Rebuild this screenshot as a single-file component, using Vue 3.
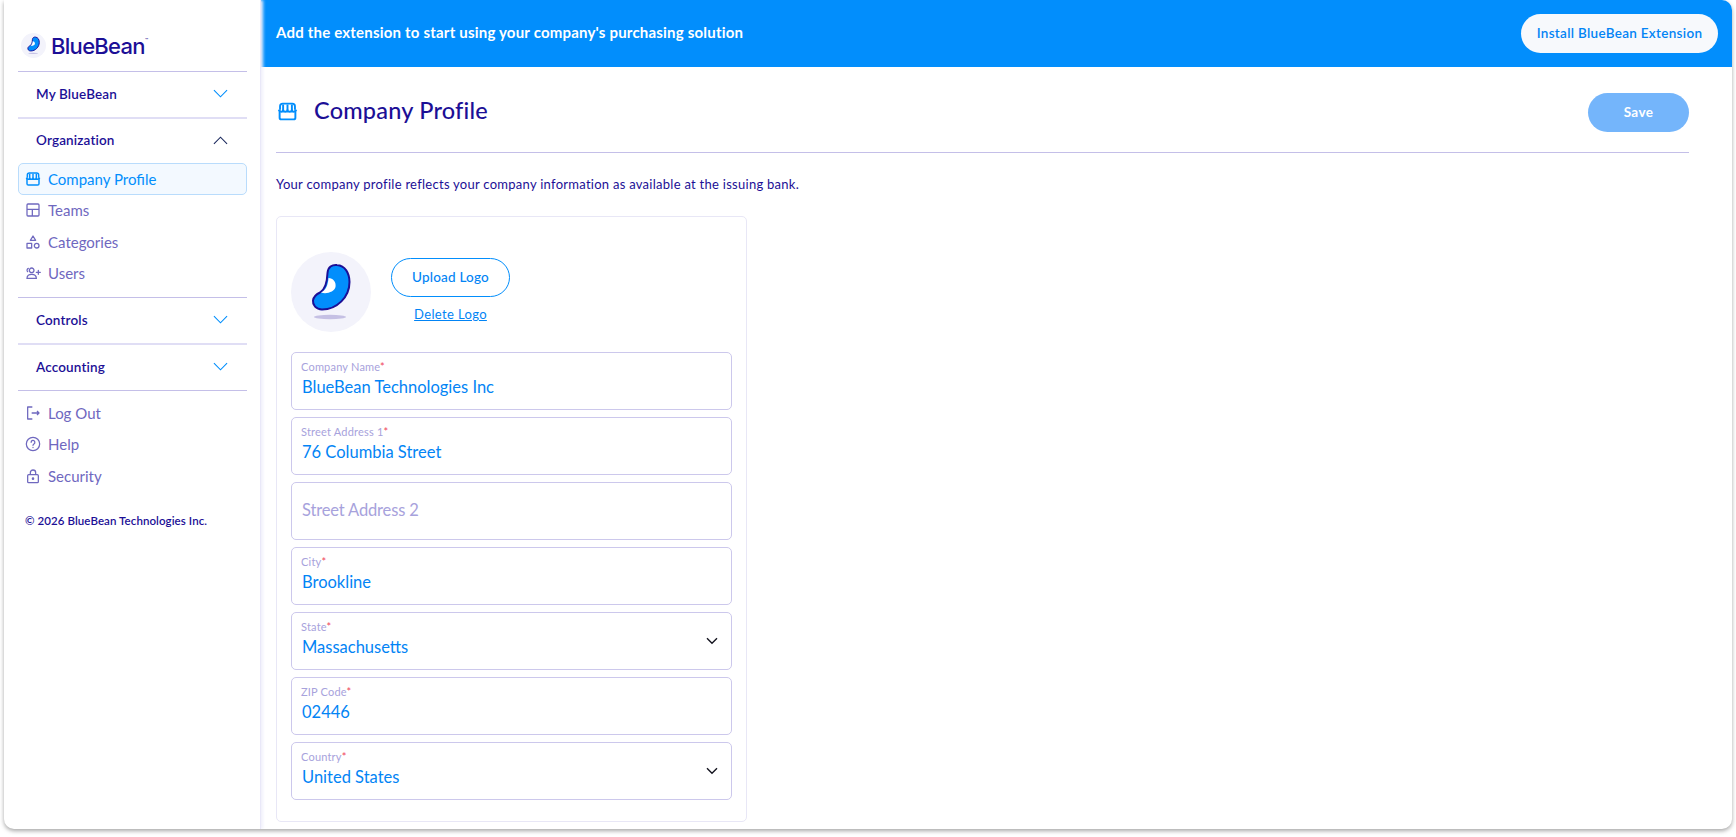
<template>
  <div class="page">
    <div class="window">
      <aside class="sidebar">
        <div class="brand">
          <svg class="brand-mark" viewBox="0 0 80 80">
            <circle cx="40" cy="40" r="40" fill="#f3f3fb" />
            <path :d="beanPath" fill="#028efc" stroke="#1c0f96" stroke-width="3" />
            <path :d="beanGlow" fill="#fff" />
            <ellipse cx="39" cy="65" rx="16" ry="2" fill="#c5c0e4" />
          </svg>
          <span class="brand-name">BlueBean<sup>™</sup></span>
        </div>

        <template v-for="section in sections" :key="section.name">
          <div class="section" :class="{ thick: section.thick, tall: section.tall }">
            <span>{{ section.name }}</span>
            <svg class="chevron" :class="{ open: section.items }" viewBox="0 0 16 9">
              <path d="M1 1l7 7 7-7" fill="none" stroke="currentColor" stroke-width="1.2" />
            </svg>
          </div>
          <div v-if="section.items" class="items">
            <a
              v-for="item in section.items"
              :key="item.label"
              class="item"
              :class="{ active: item.active }"
            >
              <svg class="item-icon" viewBox="0 0 24 24" v-html="icons[item.icon]"></svg>
              {{ item.label }}
            </a>
          </div>
        </template>

        <div class="items bottom">
          <a v-for="item in footerItems" :key="item.label" class="item">
            <svg class="item-icon" viewBox="0 0 24 24" v-html="icons[item.icon]"></svg>
            {{ item.label }}
          </a>
        </div>
        <div class="copyright">© 2026 BlueBean Technologies Inc.</div>
      </aside>

      <main class="main">
        <div class="banner">
          <span class="banner-text">Add the extension to start using your company's purchasing solution</span>
          <button class="install" type="button">Install BlueBean Extension</button>
        </div>

        <div class="content">
          <div class="page-head">
            <svg class="head-icon" viewBox="0 0 24 24" v-html="icons.store"></svg>
            <h1>Company Profile</h1>
            <button class="save" type="button">Save</button>
          </div>
          <p class="intro">Your company profile reflects your company information as available at the issuing bank.</p>

          <section class="card">
            <div class="logo-row">
              <svg class="avatar" viewBox="0 0 80 80">
                <circle cx="40" cy="40" r="40" fill="#f3f3fb" />
                <path :d="beanPath" fill="#028efc" stroke="#1c0f96" stroke-width="2" />
                <path :d="beanGlow" fill="#fff" />
                <ellipse cx="39" cy="65" rx="16" ry="2.2" fill="#c5c0e4" />
              </svg>
              <div class="logo-actions">
                <button class="upload" type="button">Upload Logo</button>
                <a class="delete">Delete Logo</a>
              </div>
            </div>

            <div class="fields">
              <div v-for="field in fields" :key="field.label" class="field" :class="{ empty: !field.value }">
                <template v-if="field.value">
                  <label>{{ field.label }}<i>*</i></label>
                  <div class="value">{{ field.value }}</div>
                </template>
                <div v-else class="placeholder">{{ field.label }}</div>
                <svg v-if="field.select" class="caret" viewBox="0 0 12 8">
                  <path d="M1 1.2l5 5 5-5" fill="none" stroke="#14141f" stroke-width="1.4" />
                </svg>
              </div>
            </div>
          </section>
        </div>
      </main>
    </div>
  </div>
</template>

<script setup>
const beanPath = 'M36.5 21C37 15 41 12.5 46 13C54 13.5 58.5 21 58.5 30C58.5 45 46 57.5 31 57.5C25 57.5 21.5 53 22 48.5C22.5 44.5 26 42 29 40.5C33.5 38 36 33 36.5 21Z'
const beanGlow = 'M37.5 26C42 26 45.5 30 44.5 35C43.5 39.5 36 42.5 30 40.5C35 38 37 33 37.5 26Z'

const icons = {
  store:
    '<g fill="none" stroke="currentColor" stroke-width="2.2" stroke-linejoin="round"><path d="M3 10V19a2 2 0 0 0 2 2h14a2 2 0 0 0 2-2V10"/><path d="M3.5 10V6a3 3 0 0 1 3-3h11a3 3 0 0 1 3 3v4"/><path d="M2 10c1 3 5 3 5 0 0 3 5 3 5 0 0 3 5 3 5 0 0 3 4 3 5 0"/><path d="M7 4v6M12 4v6M17 4v6"/></g>',
  layout:
    '<g fill="none" stroke="currentColor" stroke-width="1.9"><rect x="3" y="3" width="18" height="18" rx="1.5"/><path d="M3 11h18M11 11v10"/></g>',
  shapes:
    '<g fill="none" stroke="currentColor" stroke-width="1.9" stroke-linejoin="round"><path d="M12 3l4 6.5H8z"/><rect x="3" y="14" width="7" height="7"/><circle cx="17.5" cy="17.5" r="3.5"/></g>',
  users:
    '<g fill="none" stroke="currentColor" stroke-width="1.9" stroke-linecap="round"><circle cx="10" cy="8" r="3.5"/><path d="M3 20c0-4 3-6 7-6s7 2 7 6z"/><path d="M5 5a3 3 0 0 0-1 5M20 8v6M17 11h6"/></g>',
  logout:
    '<g fill="none" stroke="currentColor" stroke-width="1.9" stroke-linejoin="round"><path d="M11 3H4v18h7"/><path d="M10 12h11M18 9l3 3-3 3"/></g>',
  help:
    '<g fill="none" stroke="currentColor" stroke-width="1.9" stroke-linecap="round"><circle cx="12" cy="12" r="10"/><path d="M9.2 9.5a2.8 2.8 0 1 1 4.2 2.4c-.9.6-1.4 1.1-1.4 2.1"/><path d="M12 17.2v.1"/></g>',
  lock:
    '<g fill="none" stroke="currentColor" stroke-width="1.9"><rect x="4" y="10" width="16" height="12" rx="1.5"/><path d="M8 10V7a4 4 0 0 1 8 0v3"/><circle cx="12" cy="16" r="1" fill="currentColor"/></g>'
}

const sections = [
  { name: 'My BlueBean' },
  {
    name: 'Organization',
    thick: true,
    items: [
      { label: 'Company Profile', icon: 'store', active: true },
      { label: 'Teams', icon: 'layout' },
      { label: 'Categories', icon: 'shapes' },
      { label: 'Users', icon: 'users' }
    ]
  },
  { name: 'Controls' },
  { name: 'Accounting', thick: true, tall: true }
]

const footerItems = [
  { label: 'Log Out', icon: 'logout' },
  { label: 'Help', icon: 'help' },
  { label: 'Security', icon: 'lock' }
]

const fields = [
  { label: 'Company Name', value: 'BlueBean Technologies Inc' },
  { label: 'Street Address 1', value: '76 Columbia Street' },
  { label: 'Street Address 2', value: '' },
  { label: 'City', value: 'Brookline' },
  { label: 'State', value: 'Massachusetts', select: true },
  { label: 'ZIP Code', value: '02446' },
  { label: 'Country', value: 'United States', select: true }
]
</script>

<style>
html,
body {
  margin: 0;
  background: #fff;
}
</style>

<style scoped>
.page {
  height: 837px;
  box-sizing: border-box;
  padding: 0 4px 8px;
  overflow: hidden;
  font-family: Lato, "Noto Sans", sans-serif;
  color: #1c0f96;
}

.window {
  display: flex;
  height: 100%;
  background: #fff;
  border-radius: 0 10px 10px 10px;
  box-shadow: 0 2px 4px rgba(0, 0, 0, 0.35);
  overflow: hidden;
}

.sidebar {
  flex: 0 0 257px;
  box-sizing: border-box;
  padding: 0 13px 0 14px;
  border-right: 1px solid #e9e8f8;
  box-shadow: 2px 0 3px #f0f0fb;
  z-index: 1;
}

.brand {
  display: flex;
  align-items: center;
  gap: 5px;
  height: 71px;
  box-sizing: border-box;
  padding: 20px 0 0 3px;
}

.brand-mark {
  width: 25px;
  height: 25px;
}

.brand-name {
  font-size: 22px;
  font-family: Inter, sans-serif;
  font-weight: 500;
  letter-spacing: -0.7px;
}

.brand-name sup {
  font-size: 5px;
  vertical-align: 12px;
  letter-spacing: 0;
}

.section {
  display: flex;
  align-items: center;
  justify-content: space-between;
  height: 46px;
  box-sizing: border-box;
  padding: 0 19px 2px 18px;
  border-top: 1px solid #c4bfe8;
  font-size: 13.5px;
  font-weight: 600;
  letter-spacing: 0.15px;
}

.section.thick {
  border-top: 2px solid #e0def5;
}

.section.tall {
  height: 47px;
}

.chevron {
  width: 15px;
  height: 9px;
  color: #028efc;
}

.chevron.open {
  color: #1c2a5e;
  transform: rotate(180deg);
}

.items {
  padding-bottom: 8px;
}

.items.bottom {
  padding-top: 6px;
  padding-bottom: 0;
  border-top: 1px solid #c4bfe8;
}

.item {
  display: flex;
  align-items: center;
  gap: 7px;
  height: 31.5px;
  box-sizing: border-box;
  padding-left: 6px;
  border: 1px solid transparent;
  border-radius: 5px;
  color: #6f68bf;
  font-size: 15px;
}

.item.active {
  background: #f3f9ff;
  border-color: #b9dcfc;
  color: #028efc;
}

.item-icon {
  width: 16px;
  height: 16px;
  flex: none;
}

.copyright {
  margin: 22px 0 0 7px;
  font-size: 11.5px;
  font-weight: 600;
  letter-spacing: 0.08px;
}

.main {
  flex: 1;
  min-width: 0;
}

.banner {
  display: flex;
  align-items: center;
  justify-content: space-between;
  height: 67px;
  box-sizing: border-box;
  padding: 0 14px 0 15px;
  background: #028efc;
}

.banner-text {
  margin-bottom: 3px;
  color: #fff;
  font-size: 15px;
  font-weight: 700;
  letter-spacing: 0.2px;
}

.install {
  width: 197px;
  height: 39px;
  padding: 0 0 2px;
  border: 0;
  border-radius: 20px;
  background: #f7f9fc;
  color: #0284f5;
  font: 600 13.5px Lato, sans-serif;
  letter-spacing: 0.3px;
}

.content {
  padding: 26px 43px 0 15px;
}

.page-head {
  display: flex;
  align-items: center;
  height: 39px;
  padding-bottom: 20px;
  border-bottom: 1px solid #c4bfe8;
}

.head-icon {
  width: 21px;
  height: 21px;
  margin: 0 16px 2px 1px;
  color: #028efc;
}

h1 {
  flex: 1;
  margin: 0 0 5px;
  font-size: 23.5px;
  font-weight: 500;
  letter-spacing: 0.2px;
}

.save {
  width: 101px;
  height: 39px;
  padding: 0 0 2px;
  border: 0;
  border-radius: 20px;
  background: #74b5fb;
  color: #fff;
  font: 700 13.5px Lato, sans-serif;
  letter-spacing: 0.4px;
}

.intro {
  margin: 22px 0 0;
  height: 18px;
  font-size: 13px;
  line-height: 18px;
  letter-spacing: 0.27px;
}

.card {
  width: 471px;
  height: 606px;
  box-sizing: border-box;
  margin-top: 23px;
  padding: 35px 14px 0;
  border: 1px solid #e8e7f6;
  border-radius: 5px;
}

.logo-row {
  display: flex;
  gap: 20px;
}

.avatar {
  width: 80px;
  height: 80px;
}

.logo-actions {
  display: flex;
  flex-direction: column;
  align-items: center;
  padding-top: 6px;
}

.upload {
  width: 119px;
  height: 39px;
  padding: 0 0 1px;
  border: 1px solid #028efc;
  border-radius: 20px;
  background: #fff;
  color: #0284f5;
  font: 500 13.5px Lato, sans-serif;
  letter-spacing: 0.2px;
}

.delete {
  margin-top: 9px;
  color: #0284f5;
  font-size: 13px;
  letter-spacing: 0.35px;
  text-decoration: underline;
}

.fields {
  display: grid;
  gap: 7px;
  margin-top: 20px;
}

.field {
  position: relative;
  height: 58px;
  box-sizing: border-box;
  padding: 6px 10px 0 9px;
  border: 1px solid #ccc8ec;
  border-radius: 5px;
}

.field.empty {
  display: flex;
  align-items: center;
  padding-top: 0;
  padding-bottom: 1px;
}

.field label {
  display: block;
  height: 16px;
  color: #a7a2dc;
  font-size: 11px;
  line-height: 16px;
  letter-spacing: 0.2px;
}

.field label i {
  color: #f0455a;
  font-style: normal;
}

.value,
.placeholder {
  margin-top: 2px;
  margin-left: 1px;
  color: #0284f5;
  font-size: 16.5px;
  line-height: 21px;
}

.placeholder {
  margin-top: 0;
  color: #a7a2dc;
  letter-spacing: -0.15px;
}

.caret {
  position: absolute;
  top: 24px;
  right: 13px;
  width: 12px;
  height: 8px;
}
</style>
